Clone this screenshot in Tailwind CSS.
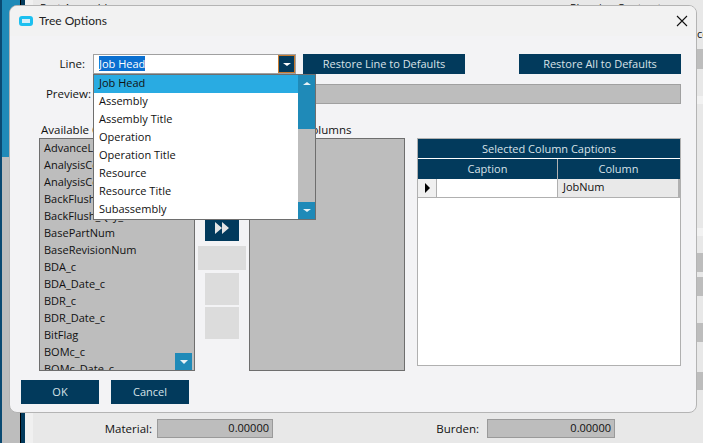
<!DOCTYPE html>
<html lang="en">
<head>
<meta charset="UTF-8">
<title>Tree Options</title>
<script src="https://cdn.jsdelivr.net/npm/@tailwindcss/browser@4"></script>
</head>
<body class="relative w-[703px] h-[443px] overflow-hidden bg-[#e8e8e8] font-['Open_Sans',sans-serif] text-[11px] text-[#111]">

  <!-- app behind the dialog -->
  <div class="flex h-full">
    <div class="w-[2px] bg-[#0a4a72]"></div>
    <div class="w-[18px] flex flex-col">
      <div class="h-[157px] bg-[#1f8ab8]"></div>
      <div class="flex-1 bg-[#bdbdbd]"></div>
    </div>
    <div class="w-[5px] bg-[#023a5c] border-l border-black"></div>
    <div class="w-[8px] bg-[#f0f0f0]"></div>
    <div class="flex-1 flex flex-col justify-end pb-[5px]">
      <div class="flex items-center h-[19px]">
        <span class="w-[119px] text-right text-[11.5px]">Material:</span>
        <div class="ml-[5px] w-[116px] h-[19px] bg-[#bdbdbd] border border-[#9a9a9a] text-right pr-[3px] leading-[16px]">0.00000</div>
        <span class="w-[206px] text-right text-[11.5px]">Burden:</span>
        <div class="ml-[8px] w-[128px] h-[19px] bg-[#bdbdbd] border border-[#9a9a9a] text-right pr-[3px] leading-[16px]">0.00000</div>
      </div>
    </div>
    <div class="w-[6px] flex flex-col pt-[49px]">
      <div class="h-[20px] bg-[#bdbdbd]"></div>
      <div class="h-[27px]"></div>
      <div class="h-[8px] bg-[#f2f2f2]"></div>
      <div class="h-[124px]"></div>
      <div class="h-[8px] bg-[#f2f2f2]"></div>
      <div class="h-[17px]"></div>
      <div class="h-[19px] bg-[#bdbdbd]"></div>
      <div class="h-[5px]"></div>
      <div class="h-[19px] bg-[#bdbdbd]"></div>
      <div class="h-[27px]"></div>
      <div class="h-[19px] bg-[#bdbdbd]"></div>
      <div class="h-[30px]"></div>
      <div class="h-[18px] bg-[#bdbdbd]"></div>
    </div>
  </div>
  <div class="absolute left-[40px] top-[1px] leading-[14px] whitespace-nowrap">Part Assembly</div>
  <div class="absolute left-[570px] top-[1px] leading-[14px] whitespace-nowrap">Planning Contract</div>
  <div class="absolute left-[697px] top-[26px] whitespace-nowrap">co</div>

  <!-- dialog -->
  <div class="absolute left-[9px] top-[5px] w-[688px] h-[408px] bg-[#f3f3f5] border border-[#b4b4b4] rounded-lg overflow-hidden">
    <div class="h-[30px] flex items-center bg-[#f2f2f2] pl-[9px] pr-[6px]">
      <div class="w-[14px] h-[10px] rounded-[3px] border-[3px] border-[#1cc0f0] bg-[#d5eef8]"></div>
      <span class="ml-[6px] font-['Lato',sans-serif] text-[12px] text-[#222]">Tree Options</span>
      <svg class="ml-auto mr-[2px]" width="12" height="12" viewBox="0 0 12 12"><path d="M1 1L11 11M11 1L1 11" stroke="#111" stroke-width="1.1" fill="none"/></svg>
    </div>

    <div class="pl-[11px] pr-[15px] pt-[18px]">
      <div class="flex h-[20px] items-center">
        <span class="w-[72px] text-right pr-[8px] text-[11.5px]">Line:</span>
        <div class="w-[203px] h-[20px] flex bg-white border border-[#a0a0a0]">
          <div class="flex-1 pl-[5px] leading-[18px]"><span class="bg-[#0a6fd0] text-white">Job Head</span></div>
          <div class="w-[17px] h-[18px] bg-[#023a5c] border border-[#c77a2e] flex items-center justify-center">
            <div class="w-0 h-0 border-x-[4px] border-x-transparent border-t-[3px] border-t-white"></div>
          </div>
        </div>
        <button class="ml-[7px] w-[162px] h-[20px] bg-[#023a5c] text-[#d8e2e8]">Restore Line to Defaults</button>
        <button class="ml-[54px] w-[162px] h-[20px] bg-[#023a5c] text-[#d8e2e8]">Restore All to Defaults</button>
      </div>

      <div class="flex h-[20px] items-center mt-[10px]">
        <span class="w-[70px] text-right text-[11.5px]">Preview:</span>
        <div class="ml-[2px] flex-1 h-[20px] bg-[#bdbdbd] border border-[#a0a0a0]"></div>
      </div>

      <div class="flex mt-[18px] h-[16px]">
        <span class="ml-[20px] whitespace-nowrap leading-[16px] text-[11.5px]">Available Columns</span>
        <span class="absolute left-[246px] whitespace-nowrap leading-[16px] text-[11.5px]">Selected Columns</span>
      </div>

      <div class="flex items-start">
        <div class="relative ml-[18px] w-[156px] h-[233px] bg-[#bdbdbd] border border-[#6e6e6e] overflow-hidden pl-[4px]">
          <div class="h-[17px] leading-[17px]">AdvanceLaborRate</div>
          <div class="h-[17px] leading-[17px]">AnalysisCode</div>
          <div class="h-[17px] leading-[17px]">AnalysisCodeDesc</div>
          <div class="h-[17px] leading-[17px]">BackFlushLabor</div>
          <div class="h-[17px] leading-[17px]">BackFlush_Qty_c</div>
          <div class="h-[17px] leading-[17px]">BasePartNum</div>
          <div class="h-[17px] leading-[17px]">BaseRevisionNum</div>
          <div class="h-[17px] leading-[17px]">BDA_c</div>
          <div class="h-[17px] leading-[17px]">BDA_Date_c</div>
          <div class="h-[17px] leading-[17px]">BDR_c</div>
          <div class="h-[17px] leading-[17px]">BDR_Date_c</div>
          <div class="h-[17px] leading-[17px]">BitFlag</div>
          <div class="h-[17px] leading-[17px]">BOMc_c</div>
          <div class="h-[17px] leading-[17px]">BOMc_Date_c</div>
          <div class="absolute right-[2px] bottom-0 w-[17px] h-[17px] bg-[#1f8ab8] flex items-center justify-center">
            <div class="w-0 h-0 border-x-[4px] border-x-transparent border-t-[4px] border-t-[#e8f2f6]"></div>
          </div>
        </div>

        <div class="w-[54px] flex flex-col items-center">
          <div class="mt-[67px] w-[34px] h-[36px] bg-[#023a5c] flex items-end justify-center pb-[7px]">
            <svg width="14" height="12" viewBox="0 0 14 12"><path d="M0 0L7 6L0 12ZM7 0L14 6L7 12Z" fill="#e4e4e4"/></svg>
          </div>
          <div class="mt-[5px] w-[48px] h-[24px] bg-[#dcdcdc]"></div>
          <div class="mt-[3px] w-[34px] h-[32px] bg-[#dcdcdc]"></div>
          <div class="mt-[2px] w-[34px] h-[32px] bg-[#dcdcdc]"></div>
        </div>

        <div class="w-[156px] h-[233px] bg-[#bdbdbd] border border-[#6e6e6e]"></div>

        <div class="ml-[12px] w-[264px] h-[228px] bg-white border border-[#b0b0b0]">
          <div class="h-[19px] leading-[19px] bg-[#023a5c] text-[#d8e2e8] text-center">Selected Column Captions</div>
          <div class="mt-px h-[20px] flex bg-[#023a5c] text-[#d8e2e8] leading-[20px] text-center pr-[1px]">
            <div class="w-[140px] border-r border-[#b0b0b0]">Caption</div>
            <div class="flex-1">Column</div>
          </div>
          <div class="flex h-[19px] border-b border-[#b0b0b0]">
            <div class="w-[19px] bg-[#f0f0f0] border-r border-[#b0b0b0] flex items-center justify-center">
              <div class="w-0 h-0 border-y-[5px] border-y-transparent border-l-[5px] border-l-black"></div>
            </div>
            <div class="w-[121px] bg-white border-r border-[#b0b0b0]"></div>
            <div class="flex-1 bg-[#e9e9e9] border-r-2 border-[#b0b0b0] pl-[5px] leading-[16px]">JobNum</div>
          </div>
        </div>
      </div>

      <div class="flex gap-[12px] mt-[9px]">
        <button class="w-[78px] h-[24px] bg-[#023a5c] text-[#d8e2e8]">OK</button>
        <button class="w-[78px] h-[24px] bg-[#023a5c] text-[#d8e2e8]">Cancel</button>
      </div>
    </div>
  </div>

  <!-- open dropdown -->
  <div class="absolute left-[93px] top-[74px] w-[223px] h-[146px] bg-white border border-[#6e6e6e] flex">
    <div class="flex-1">
      <div class="h-[18px] leading-[16px] pl-[5px] bg-[#29abe2]">Job Head</div>
      <div class="h-[18px] leading-[16px] pl-[5px]">Assembly</div>
      <div class="h-[18px] leading-[16px] pl-[5px]">Assembly Title</div>
      <div class="h-[18px] leading-[16px] pl-[5px]">Operation</div>
      <div class="h-[18px] leading-[16px] pl-[5px]">Operation Title</div>
      <div class="h-[18px] leading-[16px] pl-[5px]">Resource</div>
      <div class="h-[18px] leading-[16px] pl-[5px]">Resource Title</div>
      <div class="h-[18px] leading-[16px] pl-[5px]">Subassembly</div>
    </div>
    <div class="w-[17px] flex flex-col bg-[#bdbdbd]">
      <div class="h-[54px] bg-[#1f8ab8] flex justify-center pt-[7px]">
        <div class="w-0 h-0 border-x-[4px] border-x-transparent border-b-[3px] border-b-[#e8f2f6]"></div>
      </div>
      <div class="mt-auto h-[17px] bg-[#1f8ab8] flex items-center justify-center">
        <div class="w-0 h-0 border-x-[4px] border-x-transparent border-t-[3px] border-t-[#e8f2f6]"></div>
      </div>
    </div>
  </div>
</body>
</html>
